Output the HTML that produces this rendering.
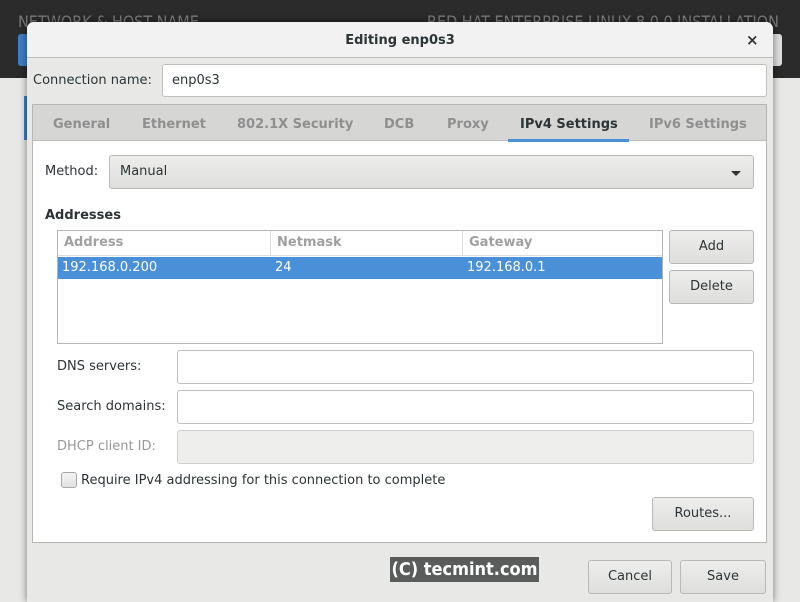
<!DOCTYPE html>
<html><head><meta charset="utf-8"><style>
*{box-sizing:border-box;margin:0;padding:0}
body{width:800px;height:600px;overflow:hidden;background:#e8e8e7;font-family:"DejaVu Sans","Liberation Sans",sans-serif;font-size:13px;color:#2e3436;position:relative}
.a{position:absolute}
.top{left:0;top:0;width:800px;height:78px;background:#2b2b2b}
.bgt{color:#7a7a7a;font-size:16px;top:12px;font-family:"DejaVu Sans Condensed","DejaVu Sans",sans-serif}
.dlg{left:27px;top:22px;width:746px;height:580px;background:#e8e8e7;border-radius:7px 7px 0 0;box-shadow:0 0 8px rgba(0,0,0,.5)}
.hdr{left:0;top:0;width:746px;height:36px;background:#f2f2f2;border-bottom:1px solid #bdbdbd;border-radius:7px 7px 0 0}
.entry{background:#fff;border:1px solid #c0c0bd;border-radius:3px}
.btn{background:linear-gradient(#ededec,#dededd);border:1px solid #b8b8b5;border-radius:3px;text-align:center;line-height:32px;color:#2e3436}
.tab{top:11px;color:#8f8f8f;font-weight:bold}
</style></head><body>
<div class="a top"></div>
<div class="a bgt" style="left:18px">NETWORK &amp; HOST NAME</div>
<div class="a bgt" style="left:427px">RED HAT ENTERPRISE LINUX 8.0.0 INSTALLATION</div>
<div class="a" style="left:18px;top:34px;width:12px;height:32px;background:#3f7dc6;border-radius:3px"></div>
<div class="a" style="left:770px;top:34px;width:12px;height:32px;background:#ddd;border-radius:3px"></div>
<div class="a" style="left:24px;top:96px;width:4px;height:44px;background:#3f7dc6"></div>
<div class="a dlg">
 <div class="a hdr"></div>
 <div class="a" style="left:0;width:746px;top:11px;text-align:center;font-weight:bold">Editing enp0s3</div>
 <div class="a" style="left:719px;top:9px;font-weight:bold;font-size:15px">×</div>
 <div class="a" style="left:6px;top:51px">Connection name:</div>
 <div class="a entry" style="left:135px;top:42px;width:605px;height:33px;padding:8px 0 0 9px">enp0s3</div>
 <div class="a" style="left:5px;top:82px;width:735px;height:439px;border:1px solid #b6b6b3;background:#fff">
  <div class="a" style="left:0;top:0;width:733px;height:36px;background:#d6d6d5;border-bottom:1px solid #bdbdbb"></div>
  <div class="a" style="left:5px;top:1px;width:728px;height:436px">
  <div class="a tab" style="left:15px">General</div>
  <div class="a tab" style="left:104px">Ethernet</div>
  <div class="a tab" style="left:199px">802.1X Security</div>
  <div class="a tab" style="left:346px">DCB</div>
  <div class="a tab" style="left:409px">Proxy</div>
  <div class="a tab" style="left:482px;color:#2e3436">IPv4 Settings</div>
  <div class="a" style="left:470px;top:33px;width:121px;height:3px;background:#4a90d9"></div>
  <div class="a tab" style="left:611px">IPv6 Settings</div>
  <div class="a" style="left:7px;top:58px">Method:</div>
  <div class="a btn" style="left:71px;top:49px;width:645px;height:34px;text-align:left;padding-left:10px">Manual</div>
  <div class="a" style="left:693px;top:65px;width:0;height:0;border-left:5px solid transparent;border-right:5px solid transparent;border-top:5px solid #2e3436"></div>
  <div class="a" style="left:7px;top:102px;font-weight:bold">Addresses</div>
  <div class="a" style="left:19px;top:124px;width:606px;height:114px;border:1px solid #b6b6b3;background:#fff">
   <div class="a" style="left:0;top:0;width:604px;height:25px;border-bottom:1px solid #ddd;color:#a0a0a0;font-weight:bold">
    <span class="a" style="left:6px;top:4px">Address</span>
    <span class="a" style="left:212px;top:0;height:25px;border-left:1px solid #ddd"></span>
    <span class="a" style="left:219px;top:4px">Netmask</span>
    <span class="a" style="left:404px;top:0;height:25px;border-left:1px solid #ddd"></span>
    <span class="a" style="left:411px;top:4px">Gateway</span>
   </div>
   <div class="a" style="left:0;top:26px;width:604px;height:22px;background:#4a90d9;color:#fff">
    <span class="a" style="left:4px;top:3px">192.168.0.200</span>
    <span class="a" style="left:217px;top:3px">24</span>
    <span class="a" style="left:409px;top:3px">192.168.0.1</span>
   </div>
  </div>
  <div class="a btn" style="left:631px;top:124px;width:85px;height:34px">Add</div>
  <div class="a btn" style="left:631px;top:164px;width:85px;height:34px">Delete</div>
  <div class="a" style="left:19px;top:253px">DNS servers:</div>
  <div class="a entry" style="left:139px;top:244px;width:577px;height:34px"></div>
  <div class="a" style="left:19px;top:293px">Search domains:</div>
  <div class="a entry" style="left:139px;top:284px;width:577px;height:34px"></div>
  <div class="a" style="left:19px;top:333px;color:#9a9a9a">DHCP client ID:</div>
  <div class="a entry" style="left:139px;top:324px;width:577px;height:34px;background:#eeeeed;border-color:#cfcfcc"></div>
  <div class="a" style="left:23px;top:366px;width:16px;height:16px;border:1px solid #a8a8a5;border-radius:3px;background:linear-gradient(#f4f4f4,#e2e2e2)"></div>
  <div class="a" style="left:43px;top:367px">Require IPv4 addressing for this connection to complete</div>
  <div class="a btn" style="left:614px;top:391px;width:102px;height:34px">Routes...</div>
  </div>
 </div>
 <div class="a" style="left:363px;top:535px;width:149px;height:25px;background:#5a5c5c;color:#fff;font-weight:bold;font-size:18px;line-height:25px;text-align:center;font-family:'DejaVu Sans Condensed','DejaVu Sans',sans-serif">(C) tecmint.com</div>
 <div class="a btn" style="left:561px;top:538px;width:84px;height:34px">Cancel</div>
 <div class="a btn" style="left:653px;top:538px;width:86px;height:34px">Save</div>
</div>
</body></html>
